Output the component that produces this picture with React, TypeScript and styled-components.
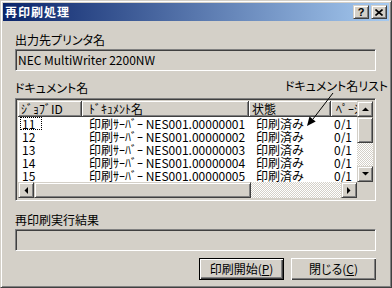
import styled, { createGlobalStyle, css } from "styled-components";

const Global = createGlobalStyle`
  html, body {
    margin: 0;
    padding: 0;
    background: #d4d0c8;
  }
  body {
    font-family: "Noto Sans CJK JP", sans-serif;
    font-size: 12px;
    font-feature-settings: "palt";
    color: #000;
  }
`;

const raised = css`
  box-sizing: border-box;
  background: #d4d0c8;
  border: 1px solid;
  border-color: #d4d0c8 #404040 #404040 #d4d0c8;
  box-shadow: inset 1px 1px #fff, inset -1px -1px #808080;
`;

const sunken = css`
  box-sizing: border-box;
  border: 1px solid;
  border-color: #808080 #fff #fff #808080;
  box-shadow: inset 1px 1px #404040, inset -1px -1px #d4d0c8;
`;

const Window = styled.div`
  position: relative;
  width: 392px;
  height: 288px;
  box-sizing: border-box;
  background: #d4d0c8;
  border: 1px solid;
  border-color: #d4d0c8 #404040 #404040 #d4d0c8;
  box-shadow: inset 1px 1px #fff, inset -1px -1px #808080;
  padding: 2px;
  display: flex;
  flex-direction: column;
`;

const TitleBar = styled.div`
  height: 18px;
  display: flex;
  align-items: center;
  padding: 0 2px;
  background: linear-gradient(to right, #0a246a, #a6caf0);
`;

const Title = styled.span`
  flex: 1;
  color: #fff;
  font-weight: 700;
  font-size: 12px;
  letter-spacing: 1px;
  line-height: 18px;
`;

const CaptionButton = styled.div`
  ${raised};
  width: 16px;
  height: 14px;
  margin-left: 2px;
  display: flex;
  align-items: center;
  justify-content: center;
  font-family: "Liberation Sans", sans-serif;
  font-weight: 700;
  font-size: 11px;
  line-height: 12px;
`;

const Body = styled.div`
  flex: 1;
  display: flex;
  flex-direction: column;
  padding: 0 13px 0 12px;
`;

const Label = styled.div<{ $top: number }>`
  margin-top: ${(p) => p.$top}px;
  line-height: 14px;
  height: 14px;
  white-space: nowrap;
`;

const Field = styled.div`
  ${sunken};
  margin-top: 2px;
  height: 22px;
  padding: 0 2px;
  line-height: 20px;
  background: #d4d0c8;
  white-space: nowrap;
`;

const ListFrame = styled.div`
  ${sunken};
  margin-top: 3px;
  height: 103px;
  padding: 2px;
  display: grid;
  grid-template-columns: 1fr 16px;
  grid-template-rows: 1fr 16px;
`;

const Viewport = styled.div`
  background: #fff;
  overflow: hidden;
  display: flex;
  flex-direction: column;
`;

const HeaderRow = styled.div`
  display: flex;
  flex: 0 0 16px;
  background: #d4d0c8;
`;

const HeadCell = styled.div<{ $w: number; $pad: number }>`
  flex: 0 0 ${(p) => p.$w}px;
  height: 16px;
  box-sizing: border-box;
  padding-left: ${(p) => p.$pad}px;
  line-height: 15px;
  border-right: 1px solid #404040;
  border-bottom: 1px solid #404040;
  box-shadow: inset 1px 1px #fff, inset -1px -1px #808080;
  white-space: nowrap;
  overflow: hidden;
`;

const Row = styled.div`
  display: flex;
  flex: 0 0 13px;
  height: 13px;
  margin-top: 0;
`;

const Cell = styled.div<{ $w: number; $pad: number }>`
  flex: 0 0 ${(p) => p.$w}px;
  padding-left: ${(p) => p.$pad}px;
  box-sizing: border-box;
  line-height: 13px;
  white-space: nowrap;
  overflow: hidden;
`;

const Focus = styled.span`
  display: inline-block;
  box-sizing: border-box;
  width: 22px;
  height: 13px;
  margin-left: -2px;
  padding-left: 1px;
  border: 1px dotted #000;
  line-height: 11px;
`;

const VScroll = styled.div`
  display: flex;
  flex-direction: column;
`;

const HScroll = styled.div`
  display: flex;
`;

const Track = styled.div`
  flex: 1;
  background: repeating-conic-gradient(#fff 0 25%, #d4d0c8 0 50%) 0 0 / 2px 2px;
`;

const ArrowButton = styled.div`
  ${raised};
  flex: 0 0 16px;
  width: 16px;
  height: 16px;
  display: flex;
  align-items: center;
  justify-content: center;
`;

const Thumb = styled.div<{ $size: number }>`
  ${raised};
  flex: 0 0 ${(p) => p.$size}px;
`;

const Corner = styled.div`
  background: #d4d0c8;
`;

const ButtonRow = styled.div`
  display: flex;
  justify-content: flex-end;
  gap: 7px;
  margin-top: 7px;
`;

const Button = styled.button<{ $default?: boolean }>`
  width: 85px;
  height: 22px;
  padding: 0;
  box-sizing: border-box;
  background: #d4d0c8;
  font-family: "Noto Sans CJK JP", sans-serif;
  font-feature-settings: "palt";
  font-size: 12px;
  color: #000;
  line-height: 18px;
  ${(p) =>
    p.$default
      ? css`
          border: 1px solid #000;
          box-shadow: inset 1px 1px #fff, inset -1px -1px #404040,
            inset -2px -2px #808080;
        `
      : css`
          border: 0;
          box-shadow: inset 1px 1px #fff, inset -1px -1px #404040,
            inset -2px -2px #808080;
        `}
  u {
    text-decoration-thickness: 1px;
  }
`;

const Callout = styled.div`
  position: absolute;
  left: 284px;
  top: 78px;
  width: 106px;
  height: 50px;
  pointer-events: none;
`;

const CalloutText = styled.div`
  line-height: 14px;
  white-space: nowrap;
`;

const CalloutArrow = styled.svg`
  position: absolute;
  left: 0;
  top: 0;
`;

const cols = [
  { w: 64, head: "ｼﾞｮﾌﾞID", hp: 3, rp: 4 },
  { w: 167, head: "ﾄﾞｷｭﾒﾝﾄ名", hp: 7, rp: 7 },
  { w: 82, head: "状態", hp: 3, rp: 7 },
  { w: 50, head: "ﾍﾟｰｼﾞ", hp: 5, rp: 3 },
];

const jobs = [11, 12, 13, 14, 15, 16].map((id, i) => ({
  id,
  doc: `印刷ｻｰﾊﾞｰ NES001.0000000${i + 1}`,
  state: "印刷済み",
  pages: "0/1",
}));

const Tri = ({ dir }: { dir: "up" | "down" | "left" | "right" }) => {
  const pts = {
    up: "0,4 7,4 3.5,0.5",
    down: "0,0 7,0 3.5,3.5",
    left: "4,0 4,7 0.5,3.5",
    right: "0,0 0,7 3.5,3.5",
  }[dir];
  const horiz = dir === "left" || dir === "right";
  return (
    <svg width={horiz ? 4 : 7} height={horiz ? 7 : 4} viewBox={horiz ? "0 0 4 7" : "0 0 7 4"}>
      <polygon points={pts} fill="#000" />
    </svg>
  );
};

export default function App() {
  return (
    <>
      <Global />
      <Window>
        <TitleBar>
          <Title>再印刷処理</Title>
          <CaptionButton>?</CaptionButton>
          <CaptionButton>
            <svg width="8" height="7" viewBox="0 0 8 7">
              <path d="M0.5 0.5 L7.5 6.5 M7.5 0.5 L0.5 6.5" stroke="#000" strokeWidth="1.6" />
            </svg>
          </CaptionButton>
        </TitleBar>
        <Body>
          <Label $top={12}>出力先プリンタ名</Label>
          <Field>NEC MultiWriter 2200NW</Field>
          <Label $top={10}>ドキュメント名</Label>
          <ListFrame>
            <Viewport>
              <HeaderRow>
                {cols.map((c) => (
                  <HeadCell key={c.head} $w={c.w} $pad={c.hp}>
                    {c.head}
                  </HeadCell>
                ))}
              </HeaderRow>
              {jobs.map((j, i) => (
                <Row key={j.id}>
                  <Cell $w={cols[0].w} $pad={cols[0].rp}>
                    {i === 0 ? <Focus>{j.id}</Focus> : j.id}
                  </Cell>
                  <Cell $w={cols[1].w} $pad={cols[1].rp}>
                    {j.doc}
                  </Cell>
                  <Cell $w={cols[2].w} $pad={cols[2].rp}>
                    {j.state}
                  </Cell>
                  <Cell $w={cols[3].w} $pad={cols[3].rp}>
                    {j.pages}
                  </Cell>
                </Row>
              ))}
            </Viewport>
            <VScroll>
              <ArrowButton>
                <Tri dir="up" />
              </ArrowButton>
              <Thumb $size={26} />
              <Track />
              <ArrowButton>
                <Tri dir="down" />
              </ArrowButton>
            </VScroll>
            <HScroll>
              <ArrowButton>
                <Tri dir="left" />
              </ArrowButton>
              <Thumb $size={217} />
              <Track />
              <ArrowButton>
                <Tri dir="right" />
              </ArrowButton>
            </HScroll>
            <Corner />
          </ListFrame>
          <Label $top={12}>再印刷実行結果</Label>
          <Field />
          <ButtonRow>
            <Button $default>
              印刷開始(<u>P</u>)
            </Button>
            <Button>
              閉じる(<u>C</u>)
            </Button>
          </ButtonRow>
        </Body>
        <Callout>
          <CalloutText>ドキュメント名リスト</CalloutText>
          <CalloutArrow width="106" height="50" viewBox="0 0 106 50">
            <line x1="48" y1="14" x2="28" y2="40" stroke="#000" strokeWidth="1" />
            <polygon points="22,47 24.5,37.4 30.7,42.4" fill="#000" />
          </CalloutArrow>
        </Callout>
      </Window>
    </>
  );
}
